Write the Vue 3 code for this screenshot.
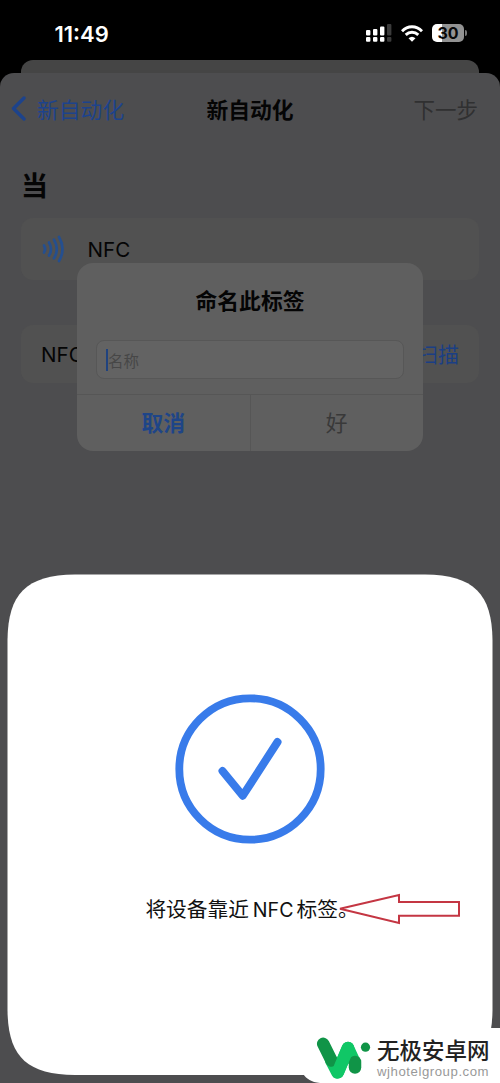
<script setup>
const bars = [
  { x: 0, top: 6, on: true },
  { x: 7, top: 5, on: true },
  { x: 14, top: 2.5, on: true },
  { x: 21, top: 0, on: false }
]
</script>

<template>
  <div class="phone">
    <header class="status">
      <span class="time">11:49</span>
      <div class="indicators">
        <svg class="signal" width="26" height="18" viewBox="0 0 26 18">
          <g v-for="b in bars" :key="b.x" :fill="b.on ? '#fff' : '#3b3b3b'">
            <rect :x="b.x" :y="b.top" width="4.4" :height="11.5 - b.top" rx="1.1" />
            <rect :x="b.x" y="13" width="4.4" height="4.8" rx="1.1" />
          </g>
        </svg>
        <svg class="wifi" width="22" height="17" viewBox="0 0 22 17">
          <g fill="none" stroke="#fff" stroke-width="2.9">
            <path d="M1 6.2C6.7 .3 15.3 .3 21 6.2" />
            <path d="M4.7 9.9C8.4 6.4 13.6 6.4 17.3 9.9" />
          </g>
          <path d="M11 16.7L7.5 13.2Q11 10.1 14.5 13.2Z" fill="#fff" />
        </svg>
        <div class="battery"><span>30</span></div>
        <i class="nub"></i>
      </div>
    </header>
    <div class="back-sheet"></div>
    <main class="sheet">
      <nav class="nav">
        <div class="back">
          <svg width="16" height="26" viewBox="0 0 16 26"><path d="M14 3L3.5 13.5L14 24" fill="none" stroke="#1d438c" stroke-width="3.4" stroke-linecap="round" stroke-linejoin="round" /></svg>
          <span>新自动化</span>
        </div>
        <h1>新自动化</h1>
        <span class="next">下一步</span>
      </nav>
      <h2>当</h2>
      <section class="card first">
        <svg width="23" height="28" viewBox="0 0 23 28">
          <g fill="none" stroke="#254f8f" stroke-width="2.7" stroke-linecap="round">
            <path d="M2 10.5Q4.3 14 2 17.5" />
            <path d="M7 7.5Q11 14 7 20.5" />
            <path d="M12 4.7Q17.6 14 12 23.3" />
            <path d="M17 2Q24 14 17 26" />
          </g>
        </svg>
        <span>NFC</span>
      </section>
      <section class="card second"><span>NFC</span><b>扫描</b></section>
    </main>

    <div class="alert">
      <h3>命名此标签</h3>
      <div class="field"><i></i><span>名称</span></div>
      <div class="actions"><span class="cancel">取消</span><span class="ok">好</span></div>
    </div>

    <div class="scan">
      <svg class="shape" width="486" height="502" viewBox="0 0 486 502">
        <path fill="#fff" d="M.5 66C1 20 19 1 68 .5H418C467 1 485 20 485.5 66V436C485 482 467 500.5 418 501H68C19 500.5 1 482 .5 436Z" />
      </svg>
      <div class="scan-body">
        <svg width="150" height="150" viewBox="0 0 150 150">
          <g fill="none" stroke="#387bea">
            <circle cx="75" cy="75" r="70.7" stroke-width="7.8" />
            <path d="M47.5 77L67.8 101.7L102.5 48" stroke-width="8" stroke-linecap="round" stroke-linejoin="round" />
          </g>
        </svg>
        <p>将设备靠近<span>NFC</span>标签。</p>
      </div>
      <svg class="arrow" width="124" height="32" viewBox="0 0 124 32"><path d="M2 15.8L61 2V9H121V22.8H61V30Z" fill="none" stroke="#c43643" stroke-width="2" /></svg>
    </div>

    <div class="brand">
      <svg class="brand-bg" width="200" height="55" viewBox="0 0 200 55"><path d="M0 0H200V55H20C11 54 7 51 3 46L0 44Z" fill="#fff" /></svg>
      <svg class="logo" width="56" height="46" viewBox="0 0 56 46">
        <g fill="none" stroke-linecap="round" stroke-width="12.5">
          <path d="M15 24L21.5 36.5L32 12L38 25" stroke="#10c766" stroke-linejoin="round" />
          <path d="M7.2 7.8L15.5 24.5" stroke="#109447" />
          <path d="M39 26V31.5" stroke="#109447" />
          <path d="M22 36L32 12" stroke="#10c766" />
        </g>
        <circle cx="49.5" cy="11.2" r="4.6" fill="#109447" />
      </svg>
      <div class="brand-text"><strong>无极安卓网</strong><span>wjhotelgroup.com</span></div>
    </div>
  </div>
</template>

<style>
body { margin: 0; background: #000; }
</style>
<style scoped>
.phone { position: relative; width: 500px; height: 1083px; overflow: hidden; background: #000; color: #050505; font-family: Inter, "Noto Sans CJK SC", sans-serif; white-space: nowrap; }
h1, h2, h3, p { margin: 0; }
svg { display: block; flex: none; }
.status { height: 60px; display: flex; justify-content: space-between; box-sizing: border-box; padding: 23px 33px 0 54.5px; color: #fff; }
.time { font-size: 22px; line-height: 22px; font-weight: 600; }
.indicators { display: flex; align-items: flex-start; }
.signal { margin-top: 1px; }
.wifi { margin: 2px 0 0 9px; }
.battery { width: 32px; height: 18px; margin: 1px 0 0 9px; border-radius: 5px; background: linear-gradient(90deg, #fff 10px, #929292 10px); color: #080808; text-align: center; font-size: 16px; line-height: 18.5px; font-weight: 700; }
.nub { width: 2px; height: 6px; margin: 7px 0 0 1px; background: #777; border-radius: 0 3px 3px 0; }
.back-sheet { height: 26px; margin: 0 21px -13px; border-radius: 12px 12px 0 0; background: #454545; }
.sheet { position: relative; height: 1010px; border-radius: 14px 14px 0 0; background: #4d4d4f; }
.nav { height: 72px; display: grid; grid-template-columns: 1fr auto 1fr; align-items: center; padding: 0 22px 2px 10px; box-sizing: border-box; font-size: 21.8px; }
.back { display: flex; align-items: center; gap: 11px; color: #1d438c; }
.nav h1 { font-size: 21.8px; font-weight: 600; margin: 0 -6px 0 6px; }
.next { text-align: right; color: #303031; font-size: 21.5px; }
h2 { margin: 22px 0 0 21px; height: 40px; line-height: 40px; font-size: 27px; font-weight: 600; }
.card { display: flex; align-items: center; margin: 0 21px; height: 62px; box-sizing: border-box; border-radius: 12px; background: #515151; font-size: 20.6px; }
.first { margin-top: 11px; padding-left: 21px; gap: 22.5px; }
.second { margin-top: 45px; height: 58px; justify-content: space-between; padding: 0 20px; }
.card b { color: #1b3f84; font-weight: 400; font-size: 21px; padding-bottom: 2px; }
.alert { position: absolute; left: 77px; top: 263px; width: 346px; height: 188px; border-radius: 16px; background: #5f5f5f; display: flex; flex-direction: column; }
.alert h3 { font-size: 21.8px; line-height: 32px; text-align: center; margin-top: 22px; font-weight: 600; }
.field { flex: none; box-sizing: border-box; margin: 23px 19px 15px; height: 39px; border-radius: 8px; border: 1px solid #575757; background: #636363; display: flex; align-items: center; padding-left: 9px; font-size: 15.5px; color: #474747; }
.field i { width: 2px; height: 22px; background: #20437f; }
.actions { flex: 1; display: grid; grid-template-columns: 173.5px 1fr; border-top: 1px solid #565656; font-size: 21.8px; text-align: center; line-height: 56px; }
.cancel { border-right: 1px solid #565656; color: #1e4588; font-weight: 600; }
.ok { color: #393939; }
.scan { position: absolute; left: 7px; top: 574px; width: 486px; height: 502px; }
.shape { position: absolute; left: 0; top: 0; }
.scan-body { position: relative; display: flex; flex-direction: column; align-items: center; padding-top: 120px; }
.scan-body p { margin-top: 50px; padding-left: 4px; font-size: 20.7px; line-height: 32px; color: #111; }
.scan-body p span { font-size: 19.6px; margin: 0 3px 0 4px; }
.arrow { position: absolute; left: 331px; top: 319px; }
.brand { position: absolute; left: 300px; top: 1028px; width: 200px; height: 55px; }
.brand-bg { position: absolute; left: 0; top: 0; }
.logo { position: absolute; left: 16px; top: 8px; }
.brand-text { position: relative; margin: 10px 0 0 77px; display: flex; flex-direction: column; color: #222; }
.brand-text strong { font-size: 22.5px; line-height: 26px; font-weight: 500; }
.brand-text span { font: 13.2px/15px "Liberation Sans", sans-serif; color: #999; letter-spacing: .55px; }
</style>
